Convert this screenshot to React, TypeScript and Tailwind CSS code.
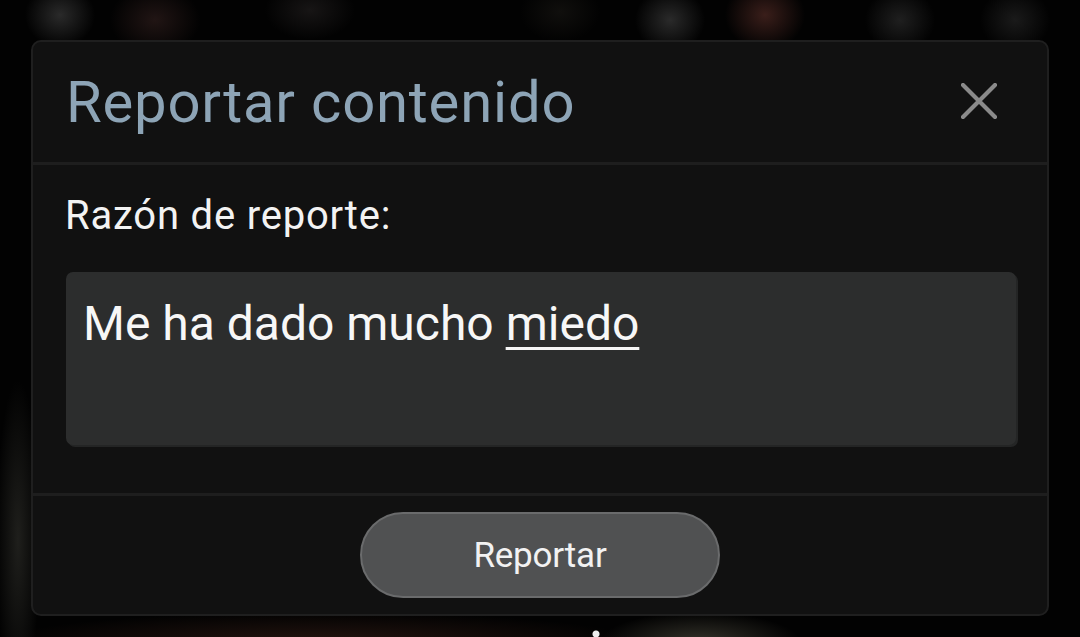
import React from "react";

export default function App() {
  return (
    <div
      className="w-[1080px] h-[637px] overflow-hidden pl-[31px] pt-[40px] bg-[#020202] bg-[radial-gradient(circle_4px_at_596px_634px,#eeeeee_3px,transparent_4px),radial-gradient(ellipse_35px_32px_at_60px_15px,#2a2a2a,transparent),radial-gradient(ellipse_45px_35px_at_155px_20px,#211514,transparent),radial-gradient(ellipse_45px_30px_at_310px_10px,#171515,transparent),radial-gradient(ellipse_40px_30px_at_560px_12px,#100f0d,transparent),radial-gradient(ellipse_35px_32px_at_670px_20px,#2a2a2a,transparent),radial-gradient(ellipse_40px_35px_at_765px_15px,#3a1e1a,transparent),radial-gradient(ellipse_35px_32px_at_900px_20px,#1f1f1f,transparent),radial-gradient(ellipse_35px_32px_at_1015px_20px,#1a1a1a,transparent),radial-gradient(ellipse_22px_160px_at_18px_540px,#1f1f1c,transparent),radial-gradient(ellipse_320px_30px_at_320px_642px,#24140f,transparent),radial-gradient(ellipse_100px_30px_at_700px_642px,#34322a,transparent)]"
      style={{ fontFamily: "Roboto, 'Noto Sans', sans-serif" }}
    >
      <div className="w-[1018px] h-[576px] flex flex-col rounded-[10px] border-2 border-[#1f1f1f] bg-[#111111]">
        <div className="h-[123px] flex items-center justify-between pl-[33px] pr-[50px] border-b-[3px] border-[#1e1e1e]">
          <span className="text-[58px] leading-none tracking-[0.8px] text-[#8da4b6]">Reportar contenido</span>
          <svg width="36" height="36" viewBox="0 0 36 36" className="mt-[-2px]">
            <path d="M2 2 L34 34 M34 2 L2 34" stroke="#8a8a8a" strokeWidth="4.2" strokeLinecap="round" />
          </svg>
        </div>
        <div className="flex-1 flex flex-col pl-[33px] pr-[31px] pt-[31px] border-b-[3px] border-[#1e1e1e]">
          <div className="text-[40px] leading-none tracking-[0.8px] text-[#f3f3f3] -ml-px">Razón de reporte:</div>
          <div className="mt-[36px] h-[173px] rounded-[7px] bg-[#2c2d2d] shadow-[2px_2px_0_#242525] pl-[17px] pt-[28px]">
            <span className="text-[48px] leading-none text-[#f7f7f7]">
              Me ha dado mucho <span className="underline decoration-[3px] underline-offset-[7px]">miedo</span>
            </span>
          </div>
        </div>
        <div className="h-[118px] flex items-center justify-center">
          <button className="w-[360px] h-[86px] rounded-full bg-[#505152] border-2 border-[#6a6b6c] text-[35px] leading-none tracking-[-0.2px] text-[#f2f2f2]">
            Reportar
          </button>
        </div>
      </div>
    </div>
  );
}
